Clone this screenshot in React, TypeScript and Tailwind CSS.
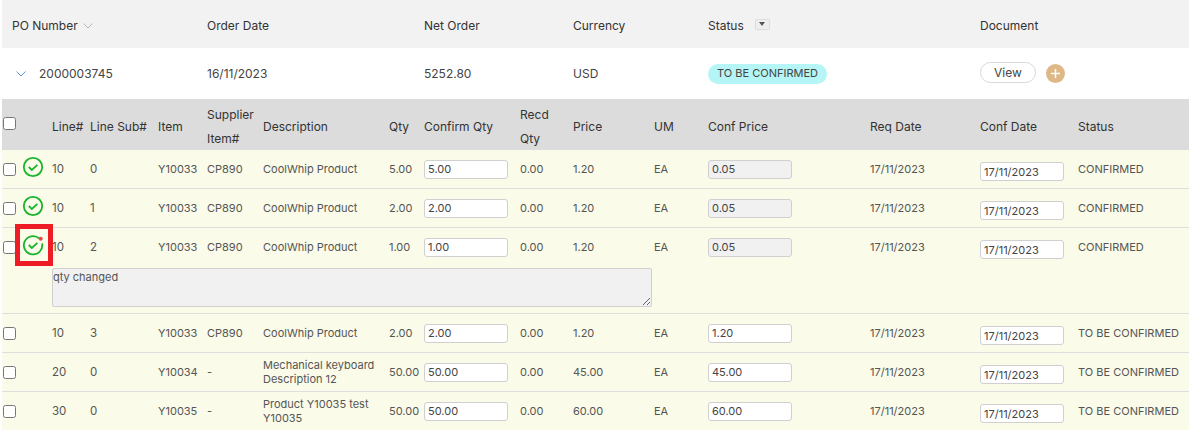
const lineCols =
  "grid grid-cols-[21px_29px_38px_68px_49px_56px_126px_35px_96px_53px_81px_54px_162px_110px_98px_1fr] items-center";

type Line = {
  line: string;
  sub: string;
  item: string;
  supplier: string;
  description: string[];
  qty: string;
  confirmQty: string;
  price: string;
  confPrice: string;
  status: string;
  confirmed: boolean;
  note?: string;
};

const lines: Line[] = [
  { line: "10", sub: "0", item: "Y10033", supplier: "CP890", description: ["CoolWhip Product"], qty: "5.00", confirmQty: "5.00", price: "1.20", confPrice: "0.05", status: "CONFIRMED", confirmed: true },
  { line: "10", sub: "1", item: "Y10033", supplier: "CP890", description: ["CoolWhip Product"], qty: "2.00", confirmQty: "2.00", price: "1.20", confPrice: "0.05", status: "CONFIRMED", confirmed: true },
  { line: "10", sub: "2", item: "Y10033", supplier: "CP890", description: ["CoolWhip Product"], qty: "1.00", confirmQty: "1.00", price: "1.20", confPrice: "0.05", status: "CONFIRMED", confirmed: true, note: "qty changed" },
  { line: "10", sub: "3", item: "Y10033", supplier: "CP890", description: ["CoolWhip Product"], qty: "2.00", confirmQty: "2.00", price: "1.20", confPrice: "1.20", status: "TO BE CONFIRMED", confirmed: false },
  { line: "20", sub: "0", item: "Y10034", supplier: "-", description: ["Mechanical keyboard", "Description 12"], qty: "50.00", confirmQty: "50.00", price: "45.00", confPrice: "45.00", status: "TO BE CONFIRMED", confirmed: false },
  { line: "30", sub: "0", item: "Y10035", supplier: "-", description: ["Product Y10035 test", "Y10035"], qty: "50.00", confirmQty: "50.00", price: "60.00", confPrice: "60.00", status: "TO BE CONFIRMED", confirmed: false },
];

const Chevron = ({ color }: { color: string }) => (
  <svg width="10" height="6" viewBox="0 0 10 6" fill="none">
    <path d="M.5.5 5 5 9.5.5" stroke={color} strokeWidth="1" />
  </svg>
);

const CheckIcon = ({ dot }: { dot: boolean }) => (
  <svg width="22" height="22" viewBox="0 0 22 22" fill="none" className="-mt-[5px] -ml-[1px]">
    <path
      d={dot ? "M17.2 4.4A9.2 9.2 0 1 0 20.1 9.5" : "M11 1.8a9.2 9.2 0 1 0 0 18.4a9.2 9.2 0 1 0 0-18.4z"}
      stroke="#19b52c"
      strokeWidth="1.8"
    />
    <path d="M6.8 11l3 2.9 5.6-5" stroke="#19b52c" strokeWidth="1.8" />
    {dot && <circle cx="18.7" cy="4.8" r="2" fill="#f0444c" />}
  </svg>
);

const Field = ({ value, disabled, className = "" }: { value: string; disabled?: boolean; className?: string }) => (
  <input
    readOnly
    value={value}
    disabled={disabled}
    className={`h-[19px] w-[84px] rounded-[3px] border border-[#d0d0d0] px-[3px] text-[11px] text-[#444] outline-none ${
      disabled ? "bg-[#f1f1f1]" : "bg-white"
    } ${className}`}
  />
);

const LineRow = ({ row }: { row: Line }) => (
  <div className="border-b border-[#dedede] bg-[#fafbe9] text-[11px] leading-[14px] text-[#555]">
    <div className={`${lineCols} h-[38px]`}>
      <div className="pl-px">
        <input type="checkbox" className="block h-[13px] w-[13px]" />
      </div>
      <div>{row.confirmed && <CheckIcon dot={!!row.note} />}</div>
      <div className="text-[11.5px]">{row.line}</div>
      <div className="text-[11.5px]">{row.sub}</div>
      <div>{row.item}</div>
      <div>{row.supplier}</div>
      <div>
        {row.description.map((text) => (
          <div key={text}>{text}</div>
        ))}
      </div>
      <div>{row.qty}</div>
      <Field value={row.confirmQty} />
      <div>0.00</div>
      <div>{row.price}</div>
      <div>EA</div>
      <Field value={row.confPrice} disabled={row.confirmed} />
      <div>17/11/2023</div>
      <Field value="17/11/2023" className="mt-[5px]" />
      <div>{row.status}</div>
    </div>
    {row.note && (
      <div className="pb-[6px] pl-[50px] pt-[2px]">
        <textarea
          readOnly
          value={row.note}
          className="block h-[39px] w-[600px] rounded-[2px] border border-[#d0d0d0] bg-[#f1f1f1] px-0 pt-px text-[11px] leading-[14px] text-[#555] outline-none"
        />
      </div>
    )}
  </div>
);

export default function App() {
  return (
    <div className="relative h-[430px] w-[1189px] overflow-hidden bg-white pl-[2px] font-['Inter',sans-serif]">
      <div className="grid h-[48px] grid-cols-[205px_217px_149px_135px_272px_1fr] items-center bg-[#f2f2f2] pt-[4px] text-[12px] text-[#333]">
        <div className="flex items-center gap-[5px] pl-[10px]">
          PO Number
          <Chevron color="#b5b5b5" />
        </div>
        <div>Order Date</div>
        <div>Net Order</div>
        <div>Currency</div>
        <div className="flex items-center gap-[11px]">
          Status
          <span className="-mt-[4px] flex h-[11px] w-[15px] items-center justify-center rounded-[2px] border border-[#ddd] bg-[#eee]">
            <span className="border-x-[3px] border-t-[4px] border-x-transparent border-t-[#555]" />
          </span>
        </div>
        <div>Document</div>
      </div>

      <div className="grid h-[51px] grid-cols-[205px_217px_149px_135px_272px_1fr] items-center text-[12px] text-[#444]">
        <div className="flex items-center gap-[13px] pl-[14px]">
          <Chevron color="#5b9bd5" />
          2000003745
        </div>
        <div>16/11/2023</div>
        <div>5252.80</div>
        <div>USD</div>
        <div>
          <span className="inline-flex h-[20px] w-[119px] items-center justify-center rounded-full bg-[#b5f5f5] text-[11px] text-[#444]">
            TO BE CONFIRMED
          </span>
        </div>
        <div className="flex items-center gap-[10px]">
          <button className="-mt-[2px] h-[21px] w-[56px] rounded-full border border-[#d8d8d8] bg-white text-[12px] text-[#444]">
            View
          </button>
          <span className="flex h-[19px] w-[19px] items-center justify-center rounded-full bg-[#deb887]">
            <svg width="9" height="9" viewBox="0 0 9 9">
              <path d="M4.5 0v9M0 4.5h9" stroke="#fff" strokeWidth="1.5" />
            </svg>
          </span>
        </div>
      </div>

      <div className={`${lineCols} h-[51px] bg-[#dcdcdc] pt-[4px] text-[12px] text-[#333]`}>
        <div className="pl-px">
          <input type="checkbox" className="-mt-[8px] block h-[13px] w-[13px]" />
        </div>
        <div />
        <div>Line#</div>
        <div>Line Sub#</div>
        <div>Item</div>
        <div className="leading-[24px]">
          Supplier
          <br />
          Item#
        </div>
        <div>Description</div>
        <div>Qty</div>
        <div>Confirm Qty</div>
        <div className="leading-[24px]">
          Recd
          <br />
          Qty
        </div>
        <div>Price</div>
        <div>UM</div>
        <div>Conf Price</div>
        <div>Req Date</div>
        <div>Conf Date</div>
        <div>Status</div>
      </div>

      {lines.map((row) => (
        <LineRow key={row.line + row.sub} row={row} />
      ))}

      {/* red annotation box from the screenshot */}
      <div className="absolute left-[15px] top-[224px] h-[42px] w-[38px] border-[5px] border-[#ee1c25]" />
    </div>
  );
}
